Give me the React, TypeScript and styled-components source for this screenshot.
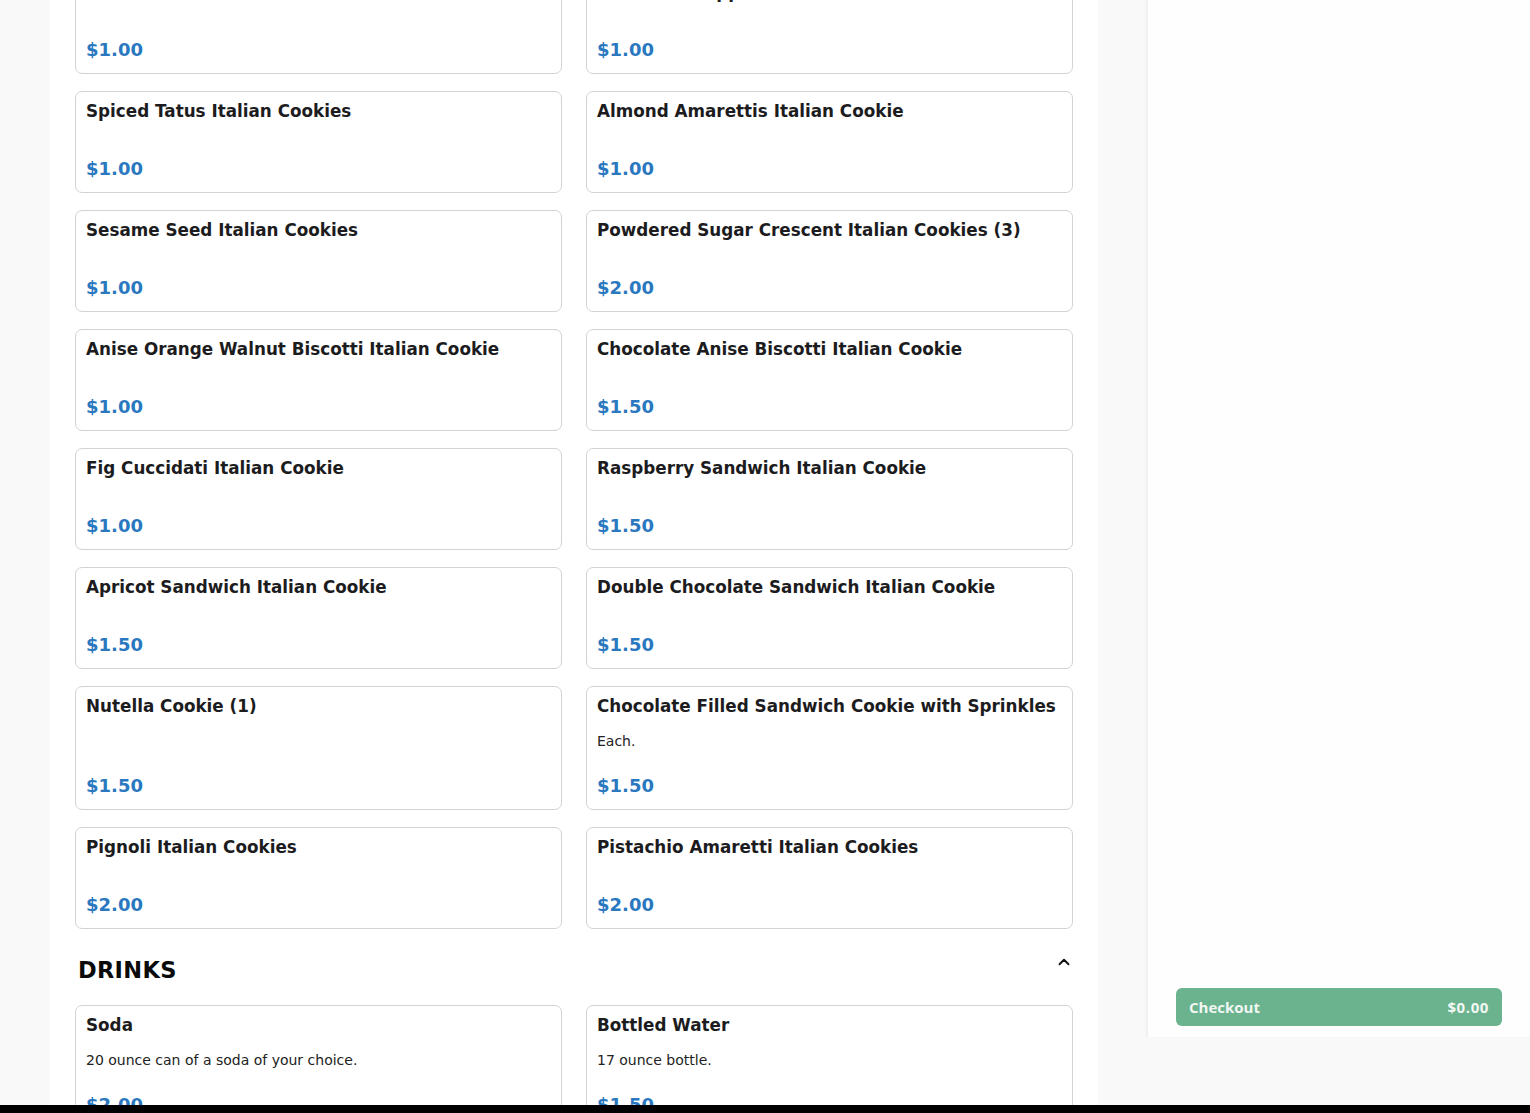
import React from "react";
import styled, { createGlobalStyle } from "styled-components";
import { ChevronUp } from "lucide-react";

const GlobalStyle = createGlobalStyle`
  html, body {
    margin: 0;
    padding: 0;
    background: #f9f9f9;
    overflow: hidden;
  }
  body {
    font-family: "DejaVu Sans", "Liberation Sans", sans-serif;
  }
  * { box-sizing: border-box; }
`;

type Item = { name: string; price: string; desc?: string };

const cookies: Item[] = [
  { name: "Rainbow Italian Cookies", price: "$1.00" },
  { name: "Chocolate Dipped Italian Cookies", price: "$1.00" },
  { name: "Spiced Tatus Italian Cookies", price: "$1.00" },
  { name: "Almond Amarettis Italian Cookie", price: "$1.00" },
  { name: "Sesame Seed Italian Cookies", price: "$1.00" },
  { name: "Powdered Sugar Crescent Italian Cookies (3)", price: "$2.00" },
  { name: "Anise Orange Walnut Biscotti Italian Cookie", price: "$1.00" },
  { name: "Chocolate Anise Biscotti Italian Cookie", price: "$1.50" },
  { name: "Fig Cuccidati Italian Cookie", price: "$1.00" },
  { name: "Raspberry Sandwich Italian Cookie", price: "$1.50" },
  { name: "Apricot Sandwich Italian Cookie", price: "$1.50" },
  { name: "Double Chocolate Sandwich Italian Cookie", price: "$1.50" },
  { name: "Nutella Cookie (1)", price: "$1.50" },
  { name: "Chocolate Filled Sandwich Cookie with Sprinkles", price: "$1.50", desc: "Each." },
  { name: "Pignoli Italian Cookies", price: "$2.00" },
  { name: "Pistachio Amaretti Italian Cookies", price: "$2.00" },
];

const drinks: Item[] = [
  { name: "Soda", price: "$2.00", desc: "20 ounce can of a soda of your choice." },
  { name: "Bottled Water", price: "$1.50", desc: "17 ounce bottle." },
];

const Page = styled.div`
  display: flex;
  align-items: flex-start;
  gap: 49px;
  padding-left: 50px;
  height: 1113px;
  overflow: hidden;
`;

const Main = styled.main`
  width: 1048px;
  flex: none;
  background: #ffffff;
  padding: 0 25px 40px;
  min-height: 1200px;
`;

const Grid = styled.div<{ $offset?: number }>`
  display: grid;
  grid-template-columns: 1fr 1fr;
  column-gap: 24px;
  row-gap: 17px;
  margin-top: ${(p) => p.$offset ?? 0}px;
`;

const Card = styled.div`
  display: flex;
  flex-direction: column;
  border: 1px solid #d3d3d3;
  border-radius: 7px;
  padding: 8px 10px 11px;
  background: #fff;
`;

const Title = styled.h3`
  margin: 0;
  font-size: 16.8px;
  line-height: 22px;
  font-weight: 700;
  color: #1c1c1e;
  white-space: nowrap;
`;

const Desc = styled.p`
  margin: 14px 0 0;
  font-size: 14px;
  line-height: 21px;
  color: #222;
`;

const Price = styled.div<{ $hasDesc: boolean }>`
  margin-top: auto;
  padding-top: ${(p) => (p.$hasDesc ? 22 : 35)}px;
  font-size: 18px;
  line-height: 24px;
  font-weight: 700;
  color: #2a78c0;
`;

const SectionHeader = styled.div`
  display: flex;
  justify-content: space-between;
  align-items: flex-start;
  margin: 26px 0 20px;
  padding-left: 3px;
`;

const SectionTitle = styled.h2`
  margin: 0;
  font-size: 22.5px;
  line-height: 30px;
  font-weight: 700;
  color: #0a0a0a;
  letter-spacing: 0.3px;
`;

const Toggle = styled.button`
  border: none;
  background: none;
  padding: 0;
  margin-top: -2px;
  display: flex;
  color: #111;
  cursor: pointer;
`;

const Sidebar = styled.aside`
  width: 383px;
  flex: none;
  height: 1037px;
  background: #fefefe;
  box-shadow: -1px 0 2px rgba(0, 0, 0, 0.04);
  border-left: 1px solid #f1f1f1;
  display: flex;
  flex-direction: column;
  justify-content: flex-end;
  padding: 0 28px 11px 28px;
`;

const CheckoutButton = styled.button`
  display: flex;
  justify-content: space-between;
  align-items: center;
  height: 38px;
  width: 100%;
  border: none;
  border-radius: 6px;
  background: #6ab38e;
  color: #f2f7f4;
  font-family: "Open Sans", "Lato", sans-serif;
  font-weight: 700;
  font-size: 15px;
  line-height: 20px;
  padding: 0 13px 1px;
  cursor: pointer;
`;

const Amount = styled.span`
  letter-spacing: 0.6px;
`;

const BottomBar = styled.div`
  position: fixed;
  left: 0;
  right: 0;
  bottom: 0;
  height: 8px;
  background: #000;
`;

function ItemCard({ item }: { item: Item }) {
  return (
    <Card>
      <Title>{item.name}</Title>
      {item.desc && <Desc>{item.desc}</Desc>}
      <Price $hasDesc={!!item.desc}>{item.price}</Price>
    </Card>
  );
}

export default function App() {
  return (
    <>
      <GlobalStyle />
      <Page>
        <Main>
          <Grid $offset={-28}>
            {cookies.map((c) => (
              <ItemCard key={c.name} item={c} />
            ))}
          </Grid>
          <SectionHeader>
            <SectionTitle>DRINKS</SectionTitle>
            <Toggle aria-label="Collapse drinks">
              <ChevronUp size={18} strokeWidth={2.5} />
            </Toggle>
          </SectionHeader>
          <Grid>
            {drinks.map((d) => (
              <ItemCard key={d.name} item={d} />
            ))}
          </Grid>
        </Main>
        <Sidebar>
          <CheckoutButton>
            <span>Checkout</span>
            <Amount>$0.00</Amount>
          </CheckoutButton>
        </Sidebar>
      </Page>
      <BottomBar />
    </>
  );
}
